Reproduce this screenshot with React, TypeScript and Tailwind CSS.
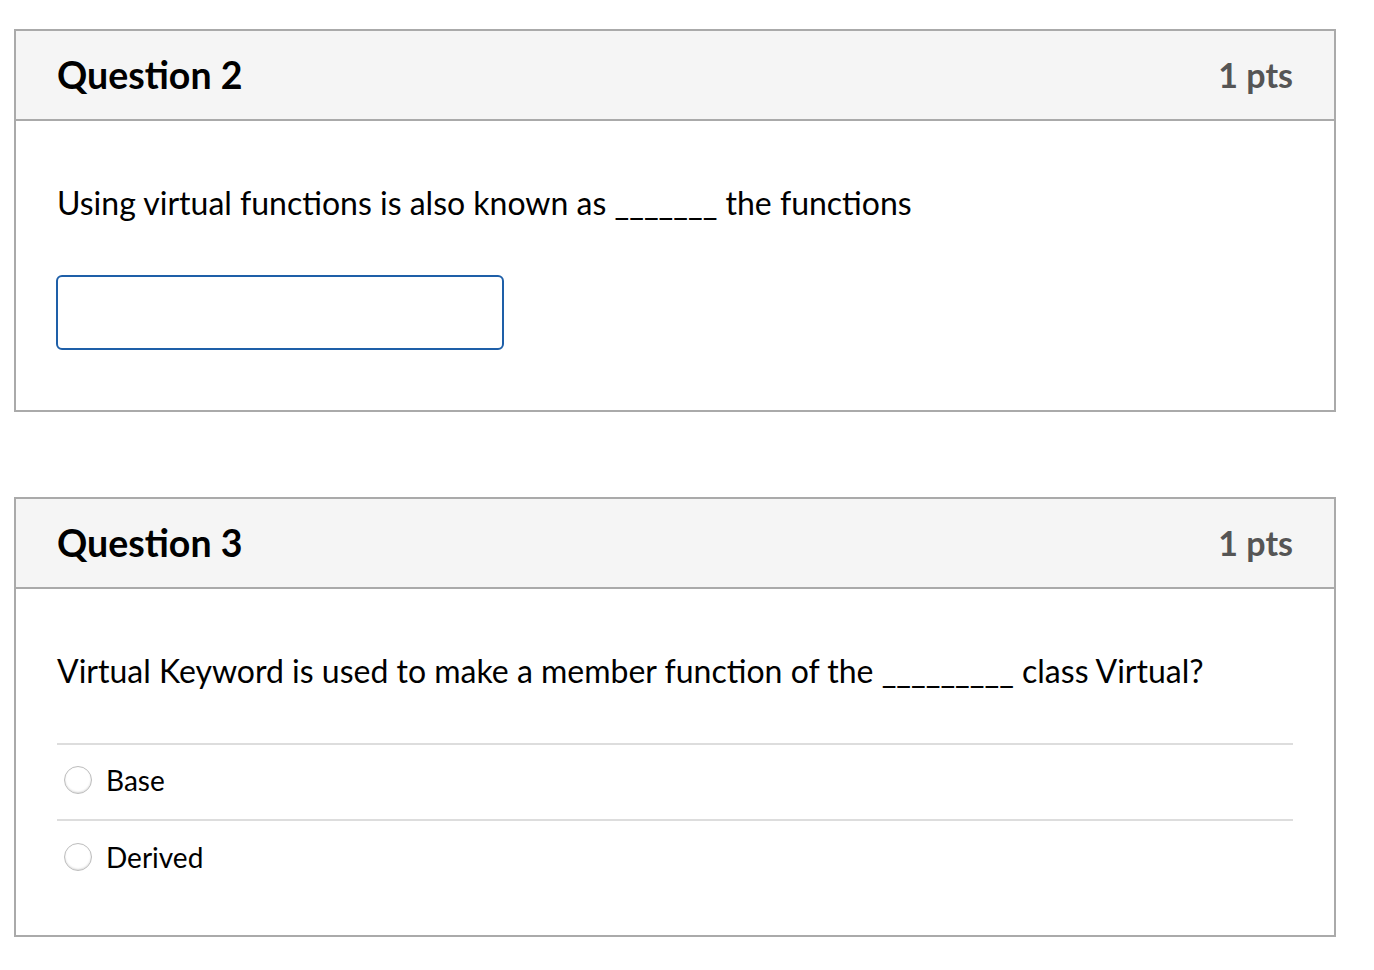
import React from 'react';

type Answer = { label: string };

const QuestionHeader = ({ title, points }: { title: string; points: string }) => (
  <div className="flex items-center justify-between h-[90px] px-[41px] bg-[#f5f5f5] border-b-2 border-[#aaaaaa]">
    <h2 className="text-[37.5px] font-bold text-black leading-none">{title}</h2>
    <span className="text-[34px] font-bold text-[#555555] leading-none">{points}</span>
  </div>
);

const Radio = () => (
  <span className="w-[28px] h-[28px] rounded-full border border-[#bdbdbd] bg-white shadow-[inset_0_-1px_2px_rgba(0,0,0,0.15)] shrink-0" />
);

const answers: Answer[] = [{ label: 'Base' }, { label: 'Derived' }];

export default function App() {
  return (
    <div
      className="min-h-screen bg-white pt-[29px] pl-[14px] w-[1374px]"
      style={{ fontFamily: 'Lato, "Open Sans", sans-serif' }}
    >
      {/* Question 2 */}
      <section className="w-[1322px] border-2 border-[#aaaaaa]">
        <QuestionHeader title="Question 2" points="1 pts" />
        <div className="h-[289px] px-[41px] pt-[63px]">
          <p className="text-[32px] text-black leading-[38px]">
            Using virtual functions is also known as _______ the functions
          </p>
          <input
            type="text"
            className="mt-[53px] ml-[-1px] block w-[448px] h-[75px] rounded-[6px] border-2 border-[#1e5fa8] outline-none"
          />
        </div>
      </section>

      {/* Question 3 */}
      <section className="mt-[85px] w-[1322px] border-2 border-[#aaaaaa]">
        <QuestionHeader title="Question 3" points="1 pts" />
        <div className="h-[346px] px-[41px] pt-[63px]">
          <p className="text-[32px] text-black leading-[38px]">
            Virtual Keyword is used to make a member function of the _________ class Virtual?
          </p>
          <div className="mt-[53px] border-t-2 border-[#dddddd]">
            {answers.map((a, i) => (
              <label
                key={a.label}
                className={`flex items-center gap-[14px] h-[76px] pl-[7px] pb-[4px] ${i === 0 ? 'border-b-2 border-[#dddddd]' : ''}`}
              >
                <Radio />
                <span className="text-[28px] leading-[34px] text-black">{a.label}</span>
              </label>
            ))}
          </div>
        </div>
      </section>
    </div>
  );
}
